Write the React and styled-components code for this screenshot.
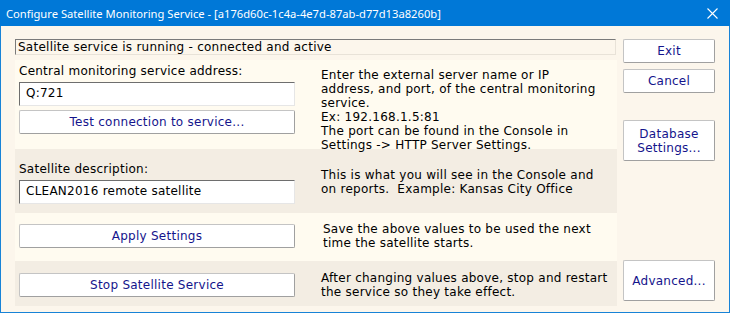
import React from "react";
import styled, { createGlobalStyle } from "styled-components";

const GlobalStyle = createGlobalStyle`
  html, body {
    margin: 0;
    padding: 0;
    background: #fcf6ec;
  }
  * {
    box-sizing: border-box;
  }
`;

const Window = styled.div`
  width: 730px;
  height: 313px;
  display: flex;
  flex-direction: column;
  background: #fcf6ec;
  border: 1px solid #1883d7;
  border-top: none;
  font-family: "DejaVu Sans", Verdana, sans-serif;
  font-size: 12px;
  letter-spacing: 0.25px;
  color: #000;
`;

const TitleBar = styled.div`
  height: 26px;
  margin: 0 -1px;
  display: flex;
  align-items: center;
  justify-content: space-between;
  padding: 0 12px 0 6px;
  background: #0078d7;
  color: #fff;
  font-family: "Noto Sans", "Open Sans", sans-serif;
  font-size: 11.2px;
  letter-spacing: 0;
`;

const Title = styled.span`
  white-space: nowrap;
`;

const CloseIcon = styled.svg`
  width: 11px;
  height: 11px;
  display: block;
`;

const Body = styled.div`
  flex: 1;
  display: flex;
  padding: 13px 13px 5px 14px;
`;

const LeftColumn = styled.div`
  width: 602px;
  display: flex;
  flex-direction: column;
`;

const RightColumn = styled.div`
  width: 92px;
  margin-left: 6px;
  display: flex;
  flex-direction: column;
  padding-bottom: 6px;
`;

const StatusBox = styled.div`
  width: 601px;
  height: 16px;
  line-height: 14px;
  padding: 0 2px;
  margin-bottom: 5px;
  border: 1px solid;
  border-color: #7a7a7a #e8e2d8 #e8e2d8 #7a7a7a;
  white-space: nowrap;
`;

const Section = styled.div`
  position: relative;
  z-index: ${(p) => p.$layer || 0};
  display: grid;
  grid-template-columns: 276px 1fr;
  column-gap: ${(p) => p.$gap || 26}px;
  align-items: ${(p) => p.$align || "start"};
  height: ${(p) => p.$height}px;
  padding: ${(p) => p.$pad || "0"};
  background: ${(p) => (p.$shade ? "#f3ede3" : "#fffbf0")};
`;

const FieldGroup = styled.div`
  display: flex;
  flex-direction: column;
`;

const Label = styled.div`
  line-height: 14px;
  margin-bottom: 4px;
`;

const TextBox = styled.div`
  height: 24px;
  line-height: 20px;
  padding: 0 6px;
  background: #fff;
  border: 1px solid;
  border-color: #6e6e6e #e6e6e6 #e6e6e6 #6e6e6e;
  white-space: nowrap;
`;

const Button = styled.button`
  height: ${(p) => p.$height || 24}px;
  width: 100%;
  margin-top: ${(p) => p.$top || 0}px;
  padding: 0 4px;
  background: #fff;
  border: 1px solid;
  border-color: #c4c4c4 #a0a0a0 #a0a0a0 #c4c4c4;
  border-radius: 2px;
  color: #14148c;
  font-family: "DejaVu Sans", Verdana, sans-serif;
  font-size: 12px;
  letter-spacing: 0.25px;
  line-height: 14px;
  text-align: center;
`;

const Help = styled.div`
  line-height: 14px;
  padding-top: ${(p) => p.$top || 0}px;
  white-space: pre;
`;

export default function App() {
  return (
    <>
      <GlobalStyle />
      <Window>
        <TitleBar>
          <Title>
            Configure Satellite Monitoring Service - [a176d60c-1c4a-4e7d-87ab-d77d13a8260b]
          </Title>
          <CloseIcon viewBox="0 0 11 11">
            <path d="M0.5 0.5 L10.5 10.5 M10.5 0.5 L0.5 10.5" stroke="#fff" strokeWidth="1.1" />
          </CloseIcon>
        </TitleBar>
        <Body>
          <LeftColumn>
            <StatusBox>Satellite service is running - connected and active</StatusBox>

            <Section $height={89} $pad="4px 0 0 4px" $layer={1}>
              <FieldGroup>
                <Label>Central monitoring service address:</Label>
                <TextBox>Q:721</TextBox>
                <Button $top={4}>Test connection to service...</Button>
              </FieldGroup>
              <Help $top={4}>
                {"Enter the external server name or IP\naddress, and port, of the central monitoring\nservice.\nEx: 192.168.1.5:81\nThe port can be found in the Console in\nSettings -> HTTP Server Settings."}
              </Help>
            </Section>

            <Section $height={64} $pad="13px 0 0 4px" $shade>
              <FieldGroup>
                <Label>Satellite description:</Label>
                <TextBox>CLEAN2016 remote satellite</TextBox>
              </FieldGroup>
              <Help $top={6}>
                {"This is what you will see in the Console and\non reports.  Example: Kansas City Office"}
              </Help>
            </Section>

            <Section $height={48} $pad="0 0 2px 4px" $align="center" $gap={28}>
              <Button>Apply Settings</Button>
              <Help>{"Save the above values to be used the next\ntime the satellite starts."}</Help>
            </Section>

            <Section $height={45} $pad="3px 0 0 4px" $align="center" $shade>
              <Button>Stop Satellite Service</Button>
              <Help>{"After changing values above, stop and restart\nthe service so they take effect."}</Help>
            </Section>
          </LeftColumn>

          <RightColumn>
            <Button>Exit</Button>
            <Button $top={6}>Cancel</Button>
            <Button $top={27} $height={41}>
              Database
              <br />
              Settings...
            </Button>
            <Button $top={99} $height={41}>
              Advanced...
            </Button>
          </RightColumn>
        </Body>
      </Window>
    </>
  );
}
